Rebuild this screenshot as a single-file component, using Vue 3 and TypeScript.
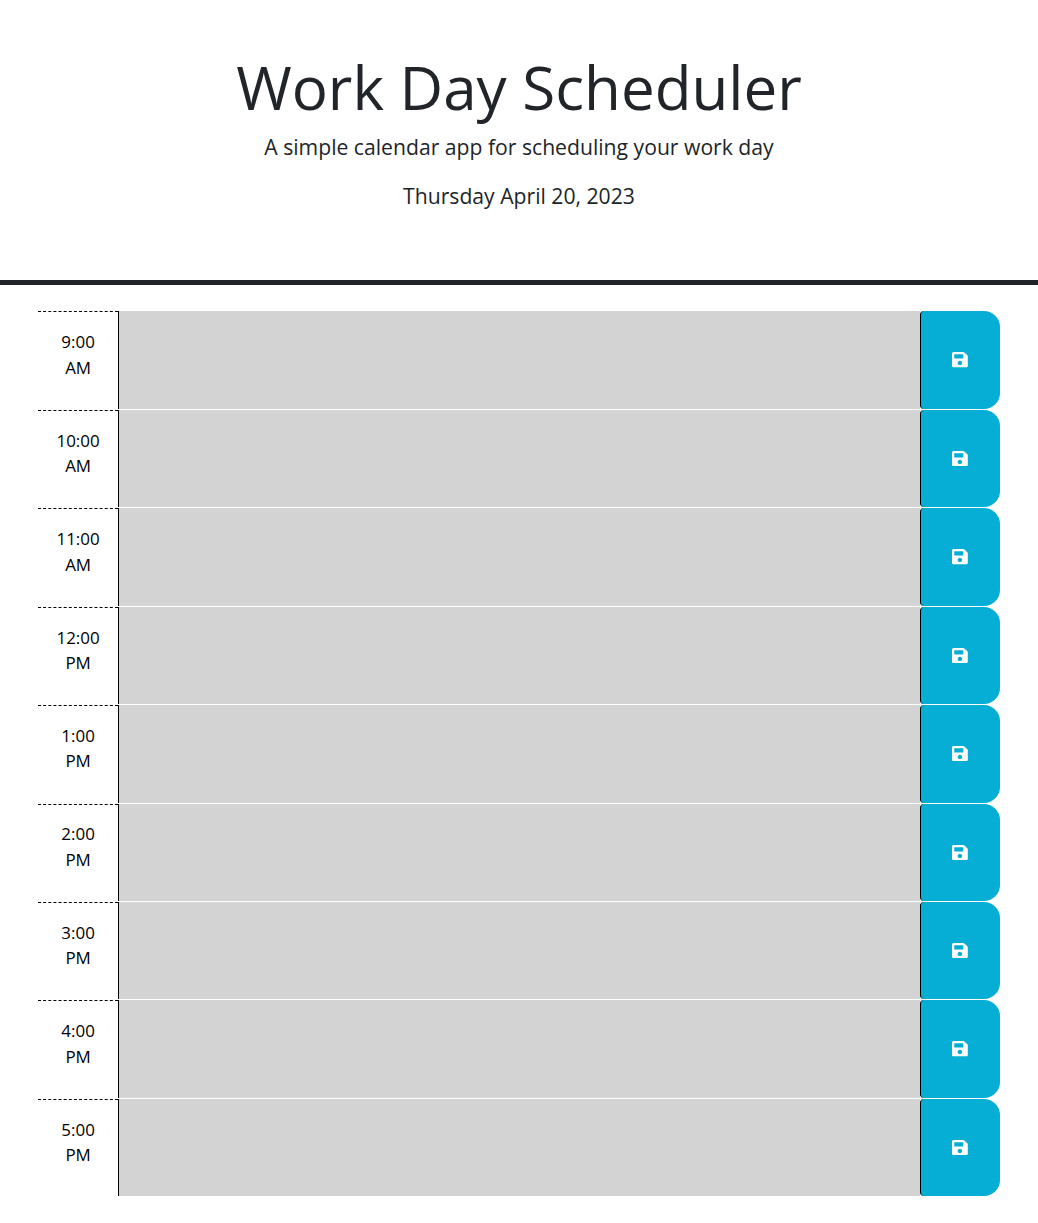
<script setup lang="ts">
interface Block {
  hour: string
  meridiem: string
}

const blocks: Block[] = [9, 10, 11, 12, 13, 14, 15, 16, 17].map((h) => ({
  hour: `${h > 12 ? h - 12 : h}:00`,
  meridiem: h < 12 ? 'AM' : 'PM',
}))
</script>

<template>
  <header class="hero">
    <h1>Work Day Scheduler</h1>
    <p class="lead">A simple calendar app for scheduling your work day</p>
    <p class="lead">Thursday April 20, 2023</p>
  </header>
  <main class="blocks">
    <section v-for="b in blocks" :key="b.hour" class="row">
      <div class="hour">{{ b.hour }}<br />{{ b.meridiem }}</div>
      <div class="entry"></div>
      <button class="save" aria-label="Save">
        <svg viewBox="0 32 448 448" preserveAspectRatio="none">
          <path
            fill="#fff"
            d="M433.941 129.941l-83.882-83.882A48 48 0 0 0 316.118 32H48C21.49 32 0 53.49 0 80v352c0 26.51 21.49 48 48 48h352c26.51 0 48-21.49 48-48V163.882a48 48 0 0 0-14.059-33.941zM224 416c-35.346 0-64-28.654-64-64 0-35.346 28.654-64 64-64s64 28.654 64 64c0 35.346-28.654 64-64 64zm96-304.52V212c0 6.627-5.373 12-12 12H76c-6.627 0-12-5.373-12-12V108c0-6.627 5.373-12 12-12h228.52c3.183 0 6.235 1.264 8.485 3.515l3.48 3.48A11.996 11.996 0 0 1 320 111.48z"
          />
        </svg>
      </button>
    </section>
  </main>
</template>

<style>
body {
  margin: 0;
  background: #fff;
}
</style>

<style scoped>
.hero {
  box-sizing: border-box;
  height: 285px;
  padding-top: 51px;
  border-bottom: 5px solid #212529;
  color: #212529;
  font-family: 'Open Sans', sans-serif;
  text-align: center;
}
h1 {
  margin: 0 0 7px;
  font-size: 60.1px;
  font-weight: 400;
  line-height: 73px;
}
.lead {
  margin: 0 0 17px;
  font-size: 21.16px;
  font-weight: 400;
  line-height: 32px;
}
.blocks {
  display: flex;
  flex-direction: column;
  gap: 1px;
  padding: 26.35px 38px 26px;
}
.row {
  display: flex;
  height: 97.44px;
}
.hour {
  box-sizing: border-box;
  width: 80.2px;
  padding-top: 16.93px;
  border-top: 1px dashed #000;
  color: #000;
  font: 400 16.93px/25.4px 'Open Sans', sans-serif;
  text-align: center;
}
.entry {
  flex: 1;
  border-left: 1px solid #000;
  background: #d3d3d3;
}
.save {
  box-sizing: border-box;
  display: flex;
  align-items: center;
  justify-content: center;
  width: 80.2px;
  padding: 0;
  border: 0;
  border-left: 1px solid #000;
  border-radius: 4px 16px 16px 4px;
  background: #06aed5;
}
.save svg {
  display: block;
  width: 15.8px;
  height: 15.3px;
  margin: 0 1.2px 0.1px 0;
}
</style>
